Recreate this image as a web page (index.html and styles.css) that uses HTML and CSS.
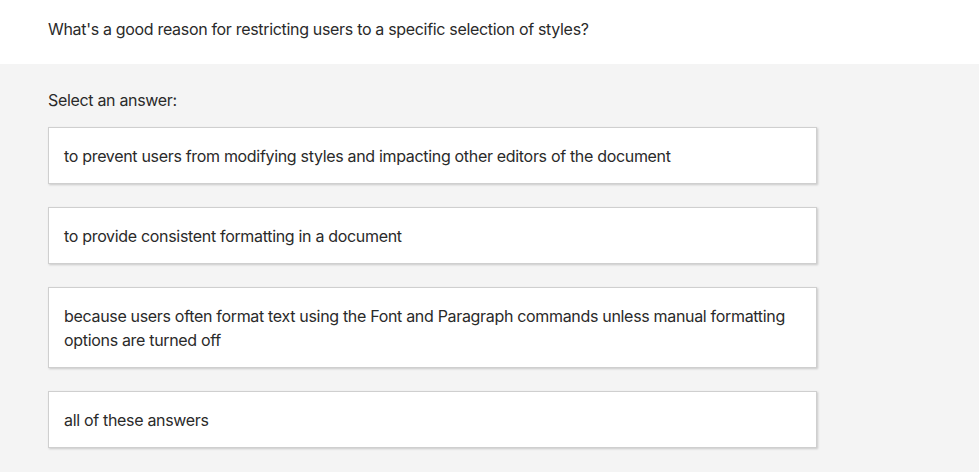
FILE: index.html
```html
<!DOCTYPE html>
<html lang="en">
<head>
    <meta charset="UTF-8">
    <meta name="viewport" content="width=device-width, initial-scale=1.0">
    <title>Quiz question</title>
    <link rel="stylesheet" href="styles.css">
</head>
<body>

    <!-- Question -->
    <header class="question">
        <p>What's a good reason for restricting users to a specific selection of styles?</p>
    </header>

    <!-- Answers -->
    <main class="answers">
        <p class="answers-label">Select an answer:</p>
        <div class="answer-list">
            <div class="answer">to prevent users from modifying styles and impacting other editors of the document</div>
            <div class="answer">to provide consistent formatting in a document</div>
            <div class="answer">because users often format text using the Font and Paragraph commands unless manual formatting options are turned off</div>
            <div class="answer">all of these answers</div>
        </div>
    </main>

</body>
</html>
```

FILE: styles.css
```css
/* Global Styles */
* {
    margin: 0;
    padding: 0;
    box-sizing: border-box;
}

body {
    font-family: 'Inter', 'Liberation Sans', sans-serif;
    font-size: 16px;
    line-height: 24px;
    letter-spacing: -0.32px;
    color: #2a2a2a;
    background: #f4f4f4;
    height: 100vh;
    overflow: hidden;
}

/* Question Header */
.question {
    background: #fff;
    padding: 17px 48px 23px;
    height: 64px;
}

/* Answers */
.answers {
    padding: 24px 48px;
}

.answers-label {
    margin-bottom: 15px;
}

.answer-list {
    display: flex;
    flex-direction: column;
    gap: 23px;
    width: 769px;
}

.answer {
    background: #fff;
    border: 1px solid #cfcfcf;
    padding: 16px 15px 15px;
    box-shadow: 1px 1px 2px rgba(0, 0, 0, 0.18);
    cursor: pointer;
}

.answer:hover {
    border-color: #999;
}
```
